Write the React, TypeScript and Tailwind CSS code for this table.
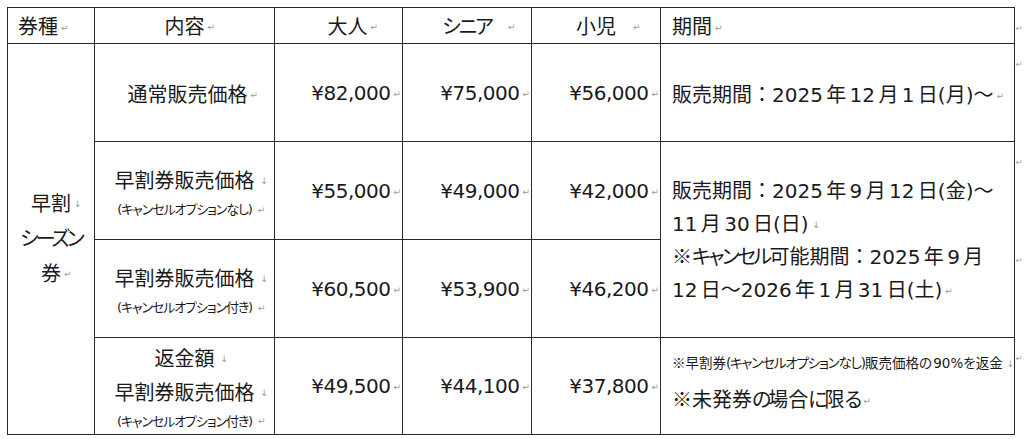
import type { FC, ReactNode } from "react";

const cell = "border border-[#2a2a2a] p-0";

// Word formatting marks (paragraph end / line break)
const Para: FC<{ className?: string }> = ({ className = "" }) => (
  <span className={`ml-[3px] align-middle text-[9px] leading-none tracking-normal text-[#9a9a9a] ${className}`}>↵</span>
);

const Br: FC<{ className?: string }> = ({ className = "" }) => (
  <span className={`ml-[4px] align-middle text-[9px] leading-none tracking-normal text-[#9a9a9a] ${className}`}>↓</span>
);

// mark hanging after centered text, so it does not shift the centering
const Hang: FC<{ children: ReactNode; mark?: "para" | "br"; gap?: string }> = ({
  children,
  mark = "para",
  gap = "ml-[3px]",
}) => (
  <span className="relative">
    {children}
    <span className={`absolute left-full top-1/2 -translate-y-1/2 whitespace-nowrap text-[9px] leading-none tracking-normal text-[#9a9a9a] ${gap}`}>
      {mark === "para" ? "↵" : "↓"}
    </span>
  </span>
);

// full-width punctuation without proportional metrics
const F: FC<{ children: ReactNode }> = ({ children }) => (
  <span className="font-['Noto_Sans_CJK_JP',sans-serif] leading-none [font-feature-settings:normal]">{children}</span>
);

// kana runs are narrower in the original face
const K: FC<{ children: ReactNode; t?: string }> = ({ children, t = "tracking-[-2.6px]" }) => (
  <span className={`leading-none ${t}`}>{children}</span>
);

const Kome: FC = () => <span className="font-['Noto_Sans_CJK_JP',sans-serif] leading-none">※</span>;

const Price: FC<{ v: string }> = ({ v }) => (
  <td className={`${cell} pr-[1px] text-right align-middle tracking-[-0.5px]`}>
    {v}
    <Para />
  </td>
);

const End: FC = () => (
  <td className="border-0 p-0 pl-[1px] pt-[15px] align-top text-[8px] leading-[12px] text-[#9a9a9a]">↵</td>
);

export default function App() {
  return (
    <div className="h-[439px] w-[1024px] overflow-hidden bg-white pl-[7px] pt-[7px] font-['DejaVu_Sans','Noto_Sans_CJK_JP',sans-serif] text-[20px] text-[#1a1a1a] [font-feature-settings:'palt'] [word-spacing:-3px]">
      <table className="w-[1017px] table-fixed border-collapse">
        <colgroup>
          <col className="w-[87px]" />
          <col className="w-[180px]" />
          <col className="w-[128px]" />
          <col className="w-[129px]" />
          <col className="w-[129px]" />
          <col className="w-[354px]" />
          <col className="w-[10px]" />
        </colgroup>
        <tbody>
          <tr className="h-[36px]">
            <td className={`${cell} pl-[10px] pt-[3px] text-left align-middle leading-[24px]`}>
              券種
              <Para />
            </td>
            <td className={`${cell} pt-[3px] text-center align-middle leading-[24px]`}>
              <Hang>内容</Hang>
            </td>
            <td className={`${cell} pl-[18px] pt-[3px] text-center align-middle leading-[24px]`}>
              <Hang>大人</Hang>
            </td>
            <td className={`${cell} pt-[3px] text-center align-middle leading-[24px]`}>
              <Hang gap="ml-[16px]">
                <K t="tracking-[-2px]">シニア</K>
              </Hang>
            </td>
            <td className={`${cell} pt-[3px] text-center align-middle leading-[24px]`}>
              <Hang gap="ml-[17px]">小児</Hang>
            </td>
            <td className={`${cell} pl-[11px] pt-[3px] text-left align-middle leading-[24px]`}>
              期間
              <Para />
            </td>
            <End />
          </tr>

          <tr className="h-[98px]">
            <td rowSpan={4} className={`${cell} text-center align-middle leading-[35px]`}>
              <div>
                <Hang mark="br">早割</Hang>
              </div>
              <div>
                <K t="tracking-[-3px]">シーズン</K>
              </div>
              <div>
                <Hang>券</Hang>
              </div>
            </td>
            <td className={`${cell} pl-[6px] pt-[4px] text-center align-middle`}>
              <Hang>通常販売価格</Hang>
            </td>
            <Price v="¥82,000" />
            <Price v="¥75,000" />
            <Price v="¥56,000" />
            <td className={`${cell} pl-[11px] pt-[4px] text-left align-middle`}>
              販売期間<F>：</F>2025 年 12 月 1 日(月)<F>～</F>
              <Para />
            </td>
            <End />
          </tr>

          <tr className="h-[98px]">
            <td className={`${cell} pt-[5px] text-center align-middle`}>
              <div className="leading-[34px]">
                <Hang mark="br" gap="ml-[6px]">早割券販売価格</Hang>
              </div>
              <div className="text-[13px] leading-[24px]">
                <Hang gap="ml-[6px]">
                  <K t="tracking-[-1.1px]">(キャンセルオプションなし)</K>
                </Hang>
              </div>
            </td>
            <Price v="¥55,000" />
            <Price v="¥49,000" />
            <Price v="¥42,000" />
            <td rowSpan={2} className={`${cell} pl-[11px] pt-[2px] text-left align-middle leading-[33px]`}>
              <div>
                販売期間<F>：</F>2025 年 9 月 12 日(金)<F>～</F>
              </div>
              <div>
                11 月 30 日(日)
                <Br />
              </div>
              <div>
                <Kome />
                <K>キャンセル</K>可能期間<F>：</F>2025 年 9 月
              </div>
              <div>
                12 日<F>～</F>2026 年 1 月 31 日(土)
                <Para />
              </div>
            </td>
            <End />
          </tr>

          <tr className="h-[98px]">
            <td className={`${cell} pt-[5px] text-center align-middle`}>
              <div className="leading-[34px]">
                <Hang mark="br" gap="ml-[6px]">早割券販売価格</Hang>
              </div>
              <div className="text-[13px] leading-[24px]">
                <Hang gap="ml-[6px]">
                  <K t="tracking-[-1.1px]">(キャンセルオプション付き)</K>
                </Hang>
              </div>
            </td>
            <Price v="¥60,500" />
            <Price v="¥53,900" />
            <Price v="¥46,200" />
            <End />
          </tr>

          <tr className="h-[97px]">
            <td className={`${cell} pt-[3px] text-center align-middle`}>
              <div className="leading-[34px]">
                <Hang mark="br" gap="ml-[6px]">返金額</Hang>
              </div>
              <div className="leading-[34px]">
                <Hang mark="br" gap="ml-[6px]">早割券販売価格</Hang>
              </div>
              <div className="text-[13px] leading-[24px]">
                <Hang gap="ml-[6px]">
                  <K t="tracking-[-1.1px]">(キャンセルオプション付き)</K>
                </Hang>
              </div>
            </td>
            <Price v="¥49,500" />
            <Price v="¥44,100" />
            <Price v="¥37,800" />
            <td className={`${cell} pl-[11px] pt-[14px] text-left align-top`}>
              <div className="whitespace-nowrap text-[13.5px] leading-[22px]">
                <Kome />
                早割券<K t="tracking-[-1.2px]">(キャンセルオプションなし)</K>販売価格の 90%を返金
                <Br />
              </div>
              <div className="mt-[9px] leading-[34px]">
                <Kome />
                未発券<K t="tracking-[-3px]">の</K>場合<K t="tracking-[-3px]">に</K>限<K t="tracking-[-2px]">る</K>
                <Para />
              </div>
            </td>
            <End />
          </tr>
        </tbody>
      </table>
    </div>
  );
}
